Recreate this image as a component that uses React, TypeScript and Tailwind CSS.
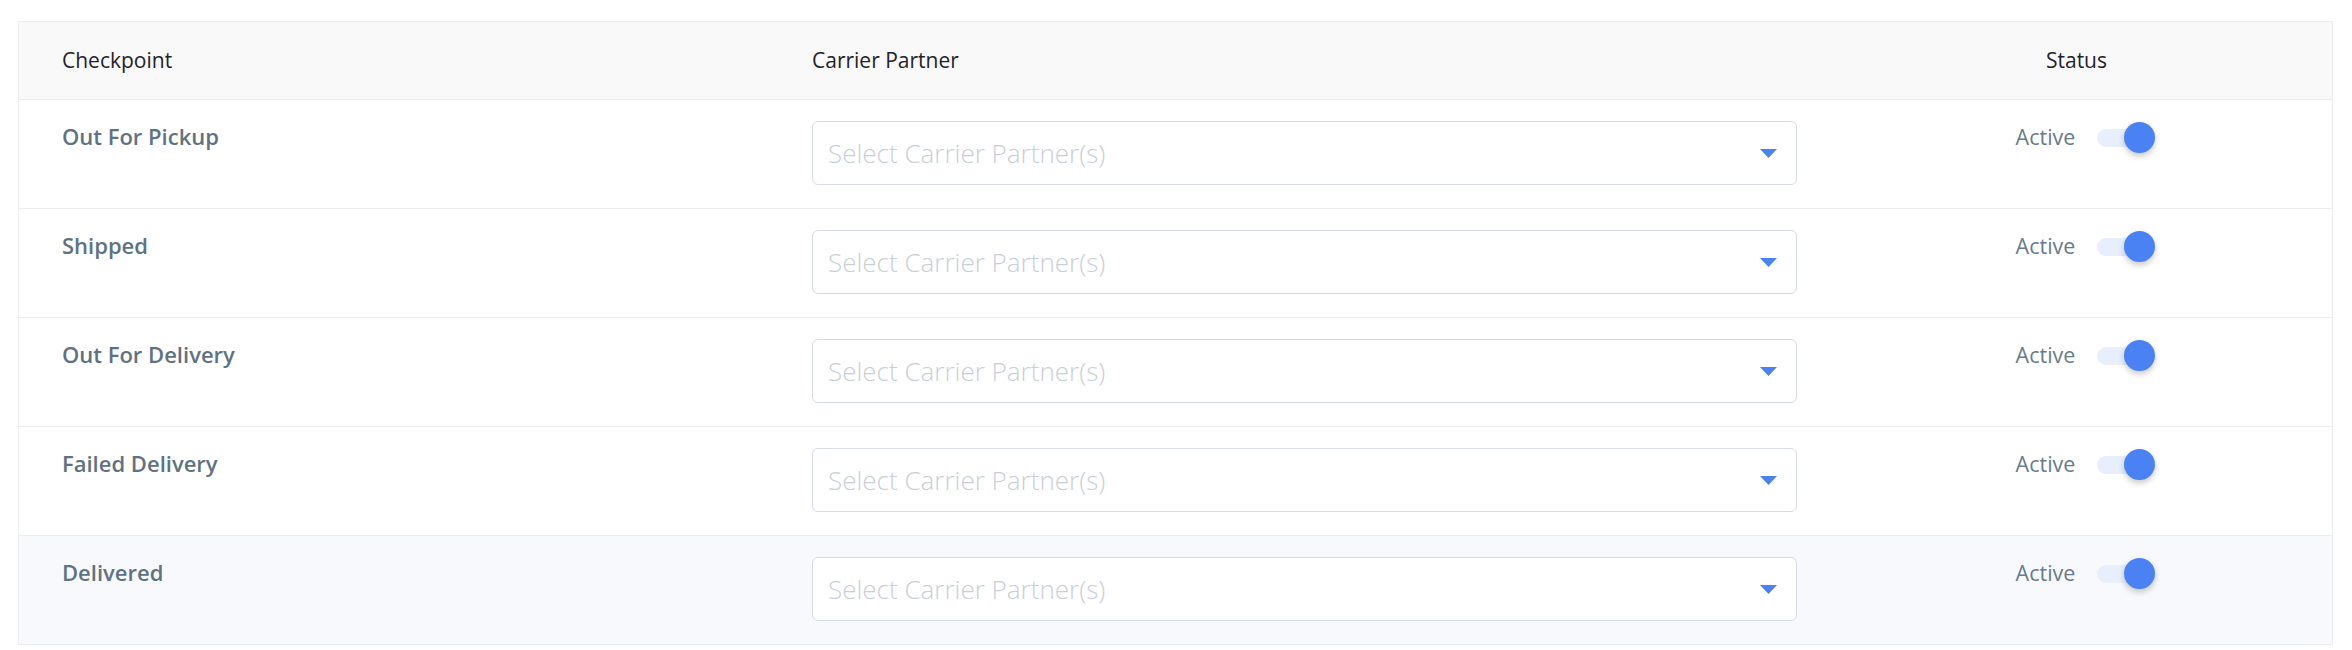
const rows = [
  "Out For Pickup",
  "Shipped",
  "Out For Delivery",
  "Failed Delivery",
  "Delivered",
];

function Toggle() {
  return (
    <div className="relative h-[31px] w-[60px]">
      <div className="absolute left-0 top-[7px] h-[18px] w-[54px] rounded-full bg-[#e8effc]" />
      <div className="absolute right-[2px] top-0 h-[31px] w-[31px] rounded-full bg-[#4a82f3] shadow-[0_3px_6px_rgba(0,0,0,0.22)]" />
    </div>
  );
}

function CarrierSelect() {
  return (
    <div className="flex h-[64px] w-[985px] items-center justify-between rounded-[6px] border border-[#d6dce2] bg-white pl-[15px] pr-[19px]">
      <span className="text-[26px] font-light text-[#c9cfd6]">
        Select Carrier Partner(s)
      </span>
      <svg width="17" height="9" viewBox="0 0 17 9">
        <path d="M0 0 H17 L8.5 9 Z" fill="#4a82f3" />
      </svg>
    </div>
  );
}

export default function App() {
  return (
    <div
      className="min-h-[650px] bg-white pl-[18px] pt-[21px]"
      style={{ fontFamily: '"Open Sans", "Noto Sans", sans-serif' }}
    >
      <div className="w-[2315px] border border-b-0 border-[#ebedf0]">
        <div className="flex h-[78px] items-center border-b border-[#ebedf0] bg-[#f9f9f9] text-[21px] font-medium text-[#1f2328]">
          <div className="w-[793px] pl-[43px]">Checkpoint</div>
          <div className="w-[1009px]">Carrier Partner</div>
          <div className="flex-1 text-center">Status</div>
        </div>
        {rows.map((label, i) => (
          <div
            key={label}
            className={
              "flex h-[109px] border-b border-[#ebedf0] pt-[21px] " +
              (i === rows.length - 1 ? "bg-[#f7f9fd]" : "bg-white")
            }
          >
            <div className="w-[793px] pl-[43px] pt-[1px] text-[22px] font-semibold leading-[28px] text-[#5f7282]">
              {label}
            </div>
            <div className="w-[1009px]">
              <CarrierSelect />
            </div>
            <div className="flex flex-1 justify-center pl-[20px]">
              <div className="flex h-[32px] items-center gap-[22px]">
                <span className="text-[21.5px] text-[#687b8b]">Active</span>
                <Toggle />
              </div>
            </div>
          </div>
        ))}
      </div>
    </div>
  );
}
